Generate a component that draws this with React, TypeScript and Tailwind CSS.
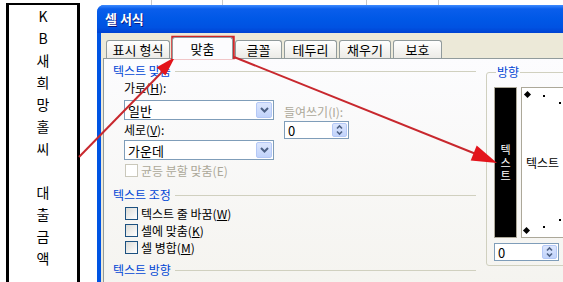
import React from "react";

const cellChars = ["K", "B", "새", "희", "망", "홀", "씨", "", "대", "출", "금", "액"];

const tabs = [
  { label: "표시 형식", w: "w-[64px]", active: false },
  { label: "맞춤", w: "w-[61px]", active: true },
  { label: "글꼴", w: "w-[47px]", active: false },
  { label: "테두리", w: "w-[53px]", active: false },
  { label: "채우기", w: "w-[52px]", active: false },
  { label: "보호", w: "w-[49px]", active: false },
];

function Chevron() {
  return (
    <svg width="9" height="6" viewBox="0 0 9 6">
      <path d="M1 1 L4.5 4.5 L8 1" fill="none" stroke="#4D6185" strokeWidth="2" />
    </svg>
  );
}

function SpinArrows() {
  return (
    <svg width="7" height="12" viewBox="0 0 7 12">
      <path d="M1 4.5 L3.5 2 L6 4.5" fill="none" stroke="#4D6185" strokeWidth="1.6" />
      <path d="M1 7.5 L3.5 10 L6 7.5" fill="none" stroke="#4D6185" strokeWidth="1.6" />
    </svg>
  );
}

function Select({ value }: { value: string }) {
  return (
    <div className="h-[20px] w-[150px] border border-[#7F9DB9] bg-white flex items-center">
      <span className="flex-1 pl-[3px] text-[13px] leading-none text-black">{value}</span>
      <div className="w-[16px] h-[16px] mr-[1px] rounded-[2px] border border-[#B4C8F6] bg-[linear-gradient(to_bottom,#DCE6FD,#C1D3FB)] flex items-center justify-center">
        <Chevron />
      </div>
    </div>
  );
}

function Spinner({ w }: { w: string }) {
  return (
    <div className={`h-[18px] ${w} border border-[#7F9DB9] bg-white flex items-center`}>
      <span className="flex-1 pl-[3px] text-[13px] leading-none text-black">0</span>
      <div className="w-[15px] h-[14px] mr-[1px] rounded-[2px] border border-[#B4C8F6] bg-[linear-gradient(to_bottom,#DCE6FD,#C1D3FB)] flex items-center justify-center">
        <SpinArrows />
      </div>
    </div>
  );
}

function Heading({ text }: { text: string }) {
  return (
    <div className="h-[16px] flex items-center pl-[9px]">
      <span className="text-[12px] leading-none text-[#0046D5]">{text}</span>
      <div className="flex-1 h-px bg-[#D0D0BF] ml-[4px]" />
    </div>
  );
}

function Check({ label, disabled }: { label: React.ReactNode; disabled?: boolean }) {
  return (
    <div className="h-[17px] flex items-center pl-[21px] gap-[3px]">
      <div
        className={
          disabled
            ? "w-[13px] h-[13px] border border-[#CAC8BB] bg-white"
            : "w-[13px] h-[13px] border border-[#1C5180] bg-[linear-gradient(135deg,#DCDCD7,#FFFFFF)]"
        }
      />
      <span className={disabled ? "text-[12px] leading-none text-[#ACA899]" : "text-[12px] leading-none text-black"}>
        {label}
      </span>
    </div>
  );
}

function Dot({ className }: { className: string }) {
  return <div className={`absolute bg-black ${className}`} />;
}

export default function App() {
  return (
    <div className="relative w-[563px] h-[282px] overflow-hidden bg-white flex [font-family:'Noto_Sans_CJK_KR',sans-serif]">
      {/* worksheet cell */}
      <div className="w-[97px] shrink-0 pl-[6px] pt-[3px]">
        <div className="w-[74px] h-[300px] border-x-[3px] border-t-2 border-black flex flex-col items-center text-[14px] leading-[22px] text-black">
          {cellChars.map((c, i) => (
            <div key={i} className="h-[22px] shrink-0">
              {c}
            </div>
          ))}
        </div>
      </div>

      {/* dialog */}
      <div className="w-[520px] shrink-0 flex flex-col">
        <div className="h-[5px] shrink-0 flex">
          <div className="w-[55px] border-r border-[#C8C8C8]" />
          <div className="w-[71px] border-r border-[#C8C8C8]" />
          <div className="w-[144px] border-r border-[#C8C8C8]" />
          <div className="w-[72px] border-r border-[#C8C8C8]" />
        </div>
        <div className="h-[300px] shrink-0 rounded-t-[7px] bg-[#0054E3] pl-[4px] flex flex-col">
          <div className="h-[28px] shrink-0 -ml-[4px] pl-[8px] rounded-t-[7px] bg-[linear-gradient(to_bottom,#3D8BFF_0%,#0A5EEB_14%,#0058E6_50%,#0052E2_80%,#0042D2_100%)] flex items-center">
            <span className="text-[13px] font-bold text-white [text-shadow:1px_1px_#0A1883]">셀 서식</span>
          </div>
          <div className="flex-1 bg-[#ECE9D8] pl-[2px] flex flex-col">
            {/* tabs */}
            <div className="h-[25px] shrink-0 pl-[3px] flex items-end gap-[2px]">
              {tabs.map((t) =>
                t.active ? (
                  <div
                    key={t.label}
                    className={`${t.w} h-[22px] -mb-px relative z-10 rounded-t-[3px] border border-b-0 border-[#919B9C] bg-[#FCFCFE] flex items-center justify-center text-[13px] text-black`}
                  >
                    {t.label}
                  </div>
                ) : (
                  <div
                    key={t.label}
                    className={`${t.w} h-[18px] rounded-t-[3px] border border-b-0 border-[#919B9C] bg-[linear-gradient(to_bottom,#FFFFFF,#ECEBE6)] flex items-center justify-center text-[13px] text-black`}
                  >
                    {t.label}
                  </div>
                )
              )}
            </div>

            {/* panel */}
            <div className="flex-1 border border-[#919B9C] bg-[linear-gradient(to_bottom,#FCFCFE,#F4F3EE)] flex">
              <div className="w-[372px] shrink-0 flex flex-col pt-[4px]">
                <Heading text="텍스트 맞춤" />
                <div className="flex pl-[20px] mt-[1px]">
                  <div className="flex flex-col w-[150px]">
                    <div className="h-[16px] flex items-center text-[12px] leading-none text-black">
                      가로(<span className="underline">H</span>):
                    </div>
                    <div className="mt-[4px]">
                      <Select value="일반" />
                    </div>
                    <div className="mt-[2px] h-[16px] flex items-center text-[12px] leading-none text-black">
                      세로(<span className="underline">V</span>):
                    </div>
                    <div className="mt-[2px]">
                      <Select value="가운데" />
                    </div>
                    <div className="mt-[2px] -ml-[20px]">
                      <Check label="균등 분할 맞춤(E)" disabled />
                    </div>
                  </div>
                  <div className="flex flex-col ml-[10px] pt-[24px]">
                    <div className="h-[16px] flex items-center text-[12px] leading-none text-[#ACA899]">
                      들여쓰기(I):
                    </div>
                    <div className="mt-[1px]">
                      <Spinner w="w-[65px]" />
                    </div>
                  </div>
                </div>

                <div className="mt-[8px]">
                  <Heading text="텍스트 조정" />
                </div>
                <div className="mt-[2px]">
                  <Check label={<>텍스트 줄 바꿈(<span className="underline">W</span>)</>} />
                  <Check label={<>셀에 맞춤(<span className="underline">K</span>)</>} />
                  <Check label={<>셀 병합(<span className="underline">M</span>)</>} />
                </div>
                <div className="mt-[6px]">
                  <Heading text="텍스트 방향" />
                </div>
                <div className="mt-[4px] pl-[20px] text-[12px] leading-[16px] text-[#ACA899]">방향(D):</div>
              </div>

              {/* orientation group */}
              <fieldset className="ml-[10px] mt-[5px] w-[100px] h-[202px] shrink-0 border border-[#D0D0BF] rounded-[3px] pl-[7px] pr-0">
                <legend className="ml-[2px] px-[1px] text-[12px] leading-[16px] text-[#0046D5]">방향</legend>
                <div className="flex gap-[4px] mt-[7px]">
                  <div className="w-[23px] h-[151px] border border-[#ACA899] bg-black flex flex-col items-center justify-center text-[11px] leading-[13px] text-white">
                    <span className="h-[13px]">텍</span>
                    <span className="h-[13px]">스</span>
                    <span className="h-[13px]">트</span>
                  </div>
                  <div className="relative flex-1 h-[151px] border border-[#ACA899] bg-white flex items-center pl-[4px] text-[12px] text-black">
                    텍스트
                    <Dot className="left-[3px] top-[4px] w-[5px] h-[5px] rotate-45" />
                    <Dot className="left-[21px] top-[7px] w-[2px] h-[2px]" />
                    <Dot className="left-[37px] top-[14px] w-[2px] h-[2px]" />
                    <Dot className="left-[2px] top-[140px] w-[5px] h-[5px] rotate-45" />
                    <Dot className="left-[21px] top-[138px] w-[2px] h-[2px]" />
                    <Dot className="left-[37px] top-[131px] w-[2px] h-[2px]" />
                  </div>
                </div>
                <div className="mt-[5px]">
                  <Spinner w="w-[65px]" />
                </div>
              </fieldset>
            </div>
          </div>
        </div>
      </div>

      {/* annotations */}
      <svg className="absolute inset-0 pointer-events-none" width="563" height="282" viewBox="0 0 563 282">
        <rect x="172.5" y="37" width="61" height="21" fill="none" stroke="#D0262A" strokeWidth="2.5" />
        <line x1="79" y1="157" x2="163" y2="71" stroke="#C8282E" strokeWidth="2" />
        <polygon points="175,57 165.4,75.6 156.8,67.2" fill="#E3141B" />
        <line x1="234" y1="57" x2="476" y2="154" stroke="#C8282E" strokeWidth="2" />
        <polygon points="497,163 470.7,160.4 476.7,145.6" fill="#E3141B" />
      </svg>
    </div>
  );
}
